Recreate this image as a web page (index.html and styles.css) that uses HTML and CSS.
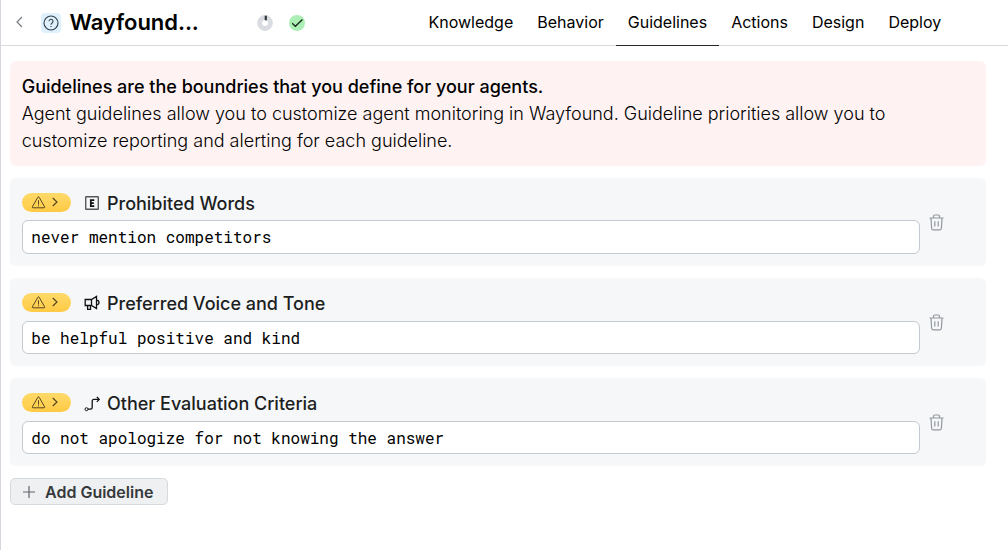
FILE: index.html
```html
<!DOCTYPE html>
<html lang="en">
<head>
<meta charset="utf-8">
<title>Wayfound Guidelines</title>
<link rel="stylesheet" href="styles.css">
</head>
<body>
<svg class="defs" width="0" height="0">
  <symbol id="trash" viewBox="0 0 15 17"><path d="M.5 4h14M4.500 4V2.200c0-.8.4-1.200 1.200-1.200h3.600c.8 0 1.200.4 1.200 1.200V4M2 4.500l.6 9.800c.1 1 .5 1.500 1.400 1.500h7c.9 0 1.300-.5 1.400-1.500L13 4.500M5.800 7.300v5.200M9.200 7.300v5.200"/></symbol>
  <symbol id="warning" viewBox="0 0 14 13"><path d="M6.400 1.200a.7.7 0 0 1 1.200 0l5.500 9.600a.7.7 0 0 1-.6 1H1.500a.7.7 0 0 1-.6-1zM7 4.300v4.200M7 9.300v1"/></symbol>
  <symbol id="chevron" viewBox="0 0 6 10"><path d="M.8 1l4.200 4-4.200 4"/></symbol>
</svg>
<main class="page">
  <header class="topbar">
    <svg class="back" viewBox="0 0 7 12"><path d="M6 1L1 6l5 5"/></svg>
    <span class="help"><svg viewBox="0 0 16 16"><circle cx="8" cy="8" r="7"/><path d="M6 6.300a2 2 0 1 1 3.100 1.700C8.300 8.500 8 8.800 8 9.700M8 11v1"/></svg></span>
    <h1 class="title">Wayfound...</h1>
    <svg class="progress" viewBox="0 0 16 16"><circle cx="8" cy="8" r="5.400" stroke="#d9dde2" stroke-width="5"/><path d="M8.800 .7v4.600" stroke="#34383d" stroke-width="2.200"/></svg>
    <svg class="done" viewBox="0 0 16 16"><circle cx="8" cy="8" r="8" fill="#abefb5"/><path d="M3.200 8.300l3.200 3L13.400 4.500" fill="none" stroke="#15251a" stroke-width="1.300"/></svg>
    <nav class="tabs">
      <a class="tab">Knowledge</a>
      <a class="tab">Behavior</a>
      <a class="tab tab-active">Guidelines</a>
      <a class="tab">Actions</a>
      <a class="tab">Design</a>
      <a class="tab">Deploy</a>
    </nav>
  </header>
  <div class="content">
    <section class="intro"><strong>Guidelines are the boundries that you define for your agents.</strong><p>Agent guidelines allow you to customize agent monitoring in Wayfound. Guideline priorities allow you to customize reporting and alerting for each guideline.</p></section>
    <section class="card">
      <div class="body">
        <div class="heading"><span class="pill"><svg class="warning"><use href="#warning"/></svg><svg class="chevron"><use href="#chevron"/></svg></span>
          <svg class="kind" viewBox="0 0 16 16"><rect x="1.700" y="1.700" width="12.600" height="12.600" rx=".5" stroke="#55585c" stroke-width="1.400"/><path d="M10.300 5.100H6.800v6h3.500M6.800 8.100h3" stroke-width="1.700"/></svg>
          <h2>Prohibited Words</h2></div>
        <div class="field">never mention competitors</div>
      </div>
      <svg class="trash"><use href="#trash"/></svg>
    </section>
    <section class="card">
      <div class="body">
        <div class="heading"><span class="pill"><svg class="warning"><use href="#warning"/></svg><svg class="chevron"><use href="#chevron"/></svg></span>
          <svg class="kind" viewBox="0 0 16 16"><path d="M1.200 4.500h6.300l5-3v12l-5-3H1.200zM7.500 4.500v6M3.600 10.500v3.800h2.900v-3.800M12.500 5.200c3.300.2 3.300 4.400 0 4.600" stroke-width="1.300"/></svg>
          <h2>Preferred Voice and Tone</h2></div>
        <div class="field field-short">be helpful positive and kind</div>
      </div>
      <svg class="trash"><use href="#trash"/></svg>
    </section>
    <section class="card">
      <div class="body">
        <div class="heading"><span class="pill"><svg class="warning"><use href="#warning"/></svg><svg class="chevron"><use href="#chevron"/></svg></span>
          <svg class="kind kind-low" viewBox="0 0 16 16"><circle cx="2.500" cy="13.200" r="1.500"/><path d="M4 13.200h2.500c1.200 0 1.700-.6 1.700-1.700V5.200c0-1.200.6-1.800 1.700-1.800H15M12.800 .9l2.500 2.500-2.500 2.500" stroke-width="1.300"/></svg>
          <h2>Other Evaluation Criteria</h2></div>
        <div class="field field-short">do not apologize for not knowing the answer</div>
      </div>
      <svg class="trash"><use href="#trash"/></svg>
    </section>
    <button class="add"><svg viewBox="0 0 12 12"><path d="M6 0v12M0 6h12"/></svg>Add Guideline</button>
  </div>
</main>
</body>
</html>
```
FILE: styles.css
```css
* { box-sizing: border-box; }
body { margin: 0; background: #fff; color: #000; font-family: Inter, "Liberation Sans", sans-serif; }
h1, h2, p { margin: 0; }
svg { flex: none; fill: none; }
.defs { display: block; }
.page { height: 550px; border-left: 1px solid #d5d9df; overflow: hidden; }
.topbar { display: flex; align-items: center; height: 46px; border-bottom: 1px solid #d9dadd; padding-left: 15px; }
.back { width: 7px; height: 12px; stroke: #777c82; stroke-width: 1.2; margin-top: -2px; }
.help { display: flex; align-items: center; justify-content: center; width: 20px; height: 20px; margin-left: 18px; background: #e0f1fe; border-radius: 4px; }
.help svg { width: 16px; height: 16px; stroke: #333d46; stroke-width: 1.1; }
.title { width: 187px; margin: -2px 0 0 8.5px; font-size: 22px; line-height: 28px; font-weight: 600; letter-spacing: -.05px; }
.progress { width: 16px; height: 16px; }
.done { width: 16px; height: 16px; margin-left: 16px; }
.tabs { display: flex; height: 46px; margin-left: 112px; }
.tab { height: 46px; padding: 0 12px; font-size: 16px; line-height: 44px; }
.tab-active { border-bottom: 1px solid #24272b; }
.content { padding: 15px 22px 0 9px; }
.intro { height: 105px; padding: 12px 11.7px; background: #fff2f2; border-radius: 6px; font-size: 18px; line-height: 27px; font-weight: 300; letter-spacing: -.005px; }
.intro strong { display: block; font-weight: 500; }
.card { display: flex; height: 88px; margin-top: 12px; padding: 12px; background: #f6f7f9; border-radius: 6px; }
.body { width: 898px; display: flex; flex-direction: column; justify-content: space-between; }
.heading { display: flex; align-items: center; height: 26px; }
.pill { display: flex; align-items: center; width: 49px; height: 19px; margin-top: -2px; padding-left: 9px; border-radius: 10px; background: linear-gradient(#ffda69, #ffca45); }
.warning { width: 15px; height: 13px; stroke: #54471f; stroke-width: 1; }
.chevron { width: 6px; height: 10px; margin-left: 6px; stroke: #54471f; stroke-width: 1.2; }
.kind { width: 16px; height: 16px; margin-left: 13px; stroke: #111; }
.kind-low { margin-top: 2px; }
h2 { margin: 2px 0 0 7px; font-size: 18px; line-height: 26px; font-weight: 500; color: #1c1e21; letter-spacing: -.01px; }
.field { height: 34px; border: 1px solid #c4cad1; border-radius: 6px; background: #fff; padding-left: 8.3px; font: 16px/32px "Roboto Mono", "DejaVu Sans Mono", monospace; }
.field-short { height: 33px; }
.trash { width: 15px; height: 17px; margin: 23.5px 0 0 9px; stroke: #92989e; stroke-width: 1.2; }
.add { display: flex; align-items: center; width: 158px; height: 27px; margin-top: 12px; padding: 0 0 0 12px; border: 1px solid #d5dadf; border-radius: 5px; background: #eff0f2; color: #36393c; font: 600 16px/24px Inter, "Liberation Sans", sans-serif; }
.add svg { width: 12px; height: 12px; margin-right: 10px; stroke: #60656a; stroke-width: 1.2; }
```
